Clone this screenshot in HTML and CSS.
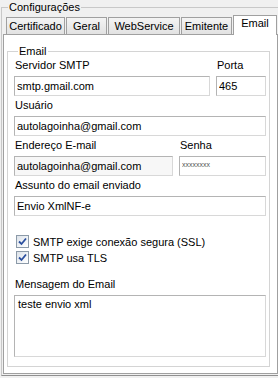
FILE: index.html
```html
<!DOCTYPE html>
<html lang="pt-BR">
<head>
    <meta charset="UTF-8">
    <title>Configurações</title>
    <link rel="stylesheet" href="styles.css">
</head>
<body>
    <fieldset class="group outer">
        <legend>Configurações</legend>

        <div class="tabs">
            <div class="tab tab-cert">Certificado</div>
            <div class="tab tab-geral">Geral</div>
            <div class="tab tab-ws">WebService</div>
            <div class="tab tab-emit">Emitente</div>
            <div class="tab tab-email active">Email</div>
        </div>

        <div class="panel">
            <fieldset class="group inner">
                <legend>Email</legend>

                <div class="row">
                    <div class="field grow">
                        <label>Servidor SMTP</label>
                        <input type="text" value="smtp.gmail.com">
                    </div>
                    <div class="field porta">
                        <label>Porta</label>
                        <input type="text" value="465">
                    </div>
                </div>

                <div class="field">
                    <label>Usuário</label>
                    <input type="text" value="autolagoinha@gmail.com">
                </div>

                <div class="row">
                    <div class="field grow">
                        <label>Endereço E-mail</label>
                        <input type="text" class="grey" value="autolagoinha@gmail.com">
                    </div>
                    <div class="field senha">
                        <label>Senha</label>
                        <input type="text" class="pwd" value="xxxxxxxx">
                    </div>
                </div>

                <div class="field">
                    <label>Assunto do email enviado</label>
                    <input type="text" value="Envio XmlNF-e">
                </div>

                <div class="checks">
                    <div class="check">
                        <span class="box"><svg width="9" height="9" viewBox="0 0 9 9"><path d="M1 4.5 L3.5 7 L8 1.5" fill="none" stroke="#2b4f9e" stroke-width="1.8"/></svg></span>
                        SMTP exige conexão segura (SSL)
                    </div>
                    <div class="check">
                        <span class="box"><svg width="9" height="9" viewBox="0 0 9 9"><path d="M1 4.5 L3.5 7 L8 1.5" fill="none" stroke="#2b4f9e" stroke-width="1.8"/></svg></span>
                        SMTP usa TLS
                    </div>
                </div>

                <div class="field">
                    <label>Mensagem do Email</label>
                    <textarea>teste envio xml</textarea>
                </div>
            </fieldset>
        </div>
    </fieldset>
</body>
</html>
```

FILE: styles.css
```css
body {
    margin: 0;
    width: 278px;
    height: 378px;
    background-color: #f0f0f0;
    font-family: "Liberation Sans", Arial, sans-serif;
    font-size: 11px;
    color: #000;
    overflow: hidden;
}
.group {
    margin: 0;
    border: 1px solid #d0d0d0;
}
.group legend {
    padding: 0 1px;
    line-height: 13px;
}
.outer {
    margin: 1px 0 0 1px;
    width: 277px;
    height: 375px;
    box-sizing: border-box;
    padding: 0 1px 1px 1px;
    border-color: #c8c8c8;
    border-bottom-color: #909090;
}
.outer legend {
    margin-left: 5px;
}
.tabs {
    display: flex;
    align-items: flex-end;
    height: 20px;
    padding-left: 3px;
    position: relative;
    z-index: 1;
}
.tab {
    height: 16px;
    line-height: 16px;
    box-sizing: content-box;
    border: 1px solid #a0a0a0;
    border-bottom: none;
    margin-right: 1px;
    text-align: center;
    background: linear-gradient(#f4f4f4, #e2e2e2);
}
.tab-cert { width: 57px; }
.tab-geral { width: 39px; }
.tab-ws { width: 70px; }
.tab-emit { width: 49px; }
.tab-email { width: 42px; }
.tab.active {
    height: 19px;
    line-height: 15px;
    background: #fff;
    margin-bottom: -1px;
}
.panel {
    background: #fff;
    border: 1px solid #a0a0a0;
    height: 340px;
    box-sizing: border-box;
    padding: 10px 7px 0 3px;
}
.inner {
    height: 322px;
    box-sizing: border-box;
    padding: 1px 3px 7px 6px;
    border-color: #d4d4d4;
}
.inner legend {
    margin-left: 4px;
}
.row {
    display: flex;
    gap: 6px;
}
.grow {
    flex: 1;
}
.porta {
    width: 50px;
}
.senha {
    width: 87px;
}
.field {
    margin-bottom: 3px;
}
.field label {
    display: block;
    line-height: 13px;
    margin-bottom: 4px;
    padding-left: 1px;
}
input, textarea {
    display: block;
    width: 100%;
    height: 20px;
    box-sizing: border-box;
    border: 1px solid #b4b4b4;
    border-bottom-color: #d8d8d8;
    border-right-color: #d8d8d8;
    padding: 0 2px;
    margin: 0;
    font-family: "Liberation Sans", Arial, sans-serif;
    font-size: 11px;
    color: #000;
    background: #fff;
    outline: none;
}
input.grey {
    background: #f7f7f7;
}
input.pwd {
    font-size: 7px;
    color: #555;
    padding-bottom: 4px;
}
textarea {
    height: 62px;
    resize: none;
    padding: 2px 3px;
}
.checks {
    padding: 16px 0 11px 2px;
}
.check {
    display: flex;
    align-items: center;
    gap: 4px;
    height: 13px;
    margin-bottom: 3px;
}
.box {
    width: 11px;
    height: 11px;
    border: 1px solid #8c9aa8;
    background: linear-gradient(135deg, #dde3ea, #fff);
    display: flex;
    align-items: center;
    justify-content: center;
}
```
